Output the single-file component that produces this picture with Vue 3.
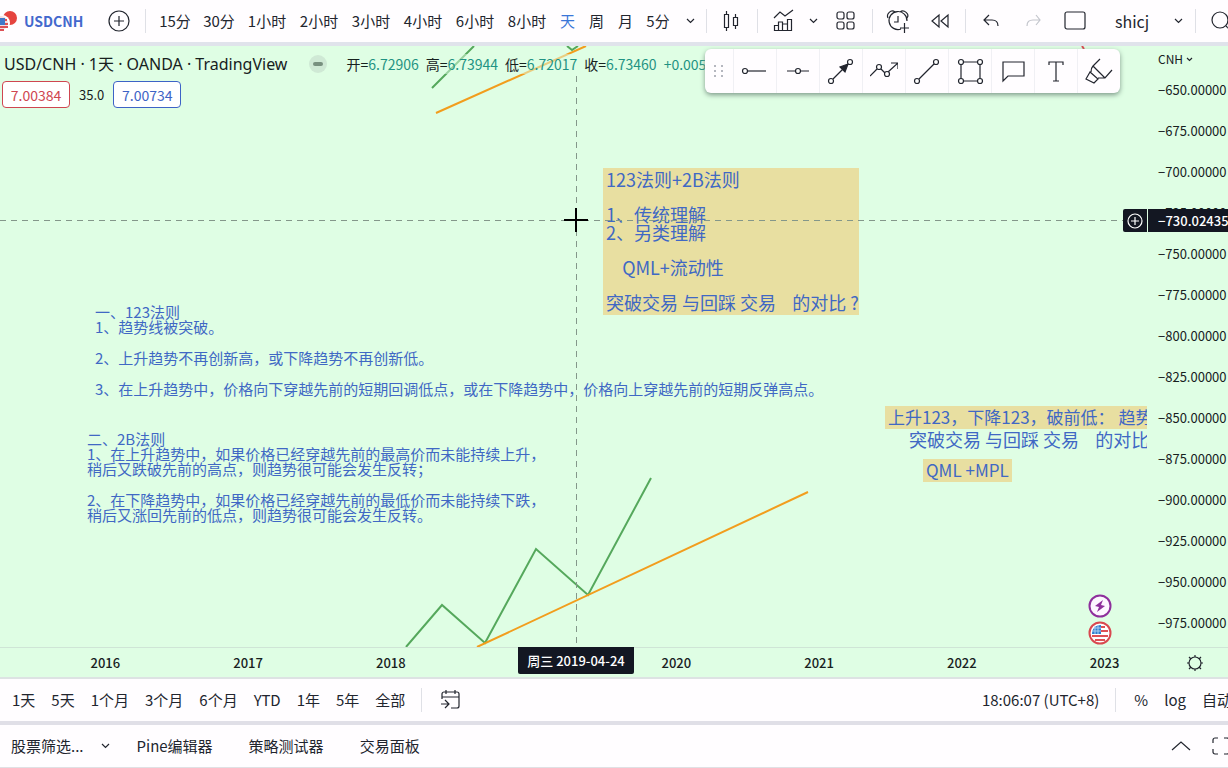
<script setup>
const minuteFrames = ['15分', '30分']
const hourFrames = ['1小时', '2小时', '3小时', '4小时', '6小时', '8小时']
const dayFrames = ['天', '周', '月']
const ohlc = [
  ['开', '6.72906'],
  ['高', '6.73944'],
  ['低', '6.72017'],
  ['收', '6.73460'],
]
const prices = Array.from({ length: 14 }, (_, i) => '−' + (650 + i * 25) + '.00000')
const years = ['2016', '2017', '2018', '', '2020', '2021', '2022', '2023']
const ranges = ['1天', '5天', '1个月', '3个月', '6个月', 'YTD', '1年', '5年', '全部']
const tools = [
  { name: '水平射线', d: 'M6 14h19', dots: [[4, 14]] },
  { name: '水平线', d: 'M3 14h9M16 14h9', dots: [[14, 14]] },
  { name: '箭头', d: 'M6 22L21 7', dots: [[4, 24], [23, 5]], head: 'M21 7l-8 3 5 5z' },
  { name: '路径', d: 'M0 19l7-7M11 12l4 4M18 15l10-9M21 6h7v6', dots: [[9, 10], [17, 17]] },
  { name: '趋势线', d: 'M6 22L21 7', dots: [[4, 24], [23, 5]] },
  { name: '矩形', d: 'M7 5h15M7 24h15M5 7v15M24 7v15', dots: [[5, 5], [24, 5], [5, 24], [24, 24]] },
  { name: '标注', d: 'M4 5h21v14H9l-5 5z', dots: [] },
  { name: '文本', d: 'M7 8V5h14v3M14 5v19M11 24h6', dots: [] },
  { name: '荧光笔', d: 'M15 2L8 9Q6 11 6 15M8 9l12 12M27 13l-7 8h-7M5 15l-4 7 8 4 4-4z', dots: [] },
]
</script>

<template>
  <div class="app">
    <header class="topbar">
      <button class="symbol">
        <svg class="flags" width="18" height="22" viewBox="0 0 18 22">
          <circle cx="10" cy="8" r="7" fill="#e5443f" />
          <circle cx="2" cy="13" r="8" fill="#fff" />
          <circle cx="1" cy="13" r="7" fill="#f3dfe1" />
          <path d="M0 17h8M0 20h4" stroke="#dd5055" stroke-width="2" />
          <path d="M0 8h5v7H0z" fill="#3f78c9" />
          <path d="M5 10h2M5 14h3" stroke="#dd5055" stroke-width="2" />
        </svg>
        <span>USDCNH</span>
      </button>
      <button class="plus" aria-label="添加商品">
        <svg width="22" height="22" viewBox="0 0 22 22"><circle cx="11" cy="11" r="10" /><path d="M6 11h10M11 6v10" /></svg>
      </button>
      <i class="sep"></i>
      <nav class="frames">
        <button v-for="f in minuteFrames" :key="f" class="minute">{{ f }}</button>
        <button v-for="f in hourFrames" :key="f" class="hour">{{ f }}</button>
        <button v-for="f in dayFrames" :key="f" class="day" :class="{ active: f === '天' }">{{ f }}</button>
        <button class="five">5分</button>
        <button class="chev" aria-label="更多周期"><svg width="9" height="6" viewBox="0 0 9 6"><path d="M1 1l3.500 3.500L8 1" /></svg></button>
      </nav>
      <i class="sep"></i>
      <div class="group">
        <button class="icon" aria-label="K线图">
          <svg width="28" height="28" viewBox="0 0 28 28"><path d="M6.500 7.500h4v13h-4zM8.500 4v4M8.500 20v4M15.500 10.500h4v8h-4zM17.500 7v3M17.500 18v4" /></svg>
        </button>
      </div>
      <i class="sep"></i>
      <div class="group tight">
        <button class="icon" aria-label="指标">
          <svg width="28" height="28" viewBox="0 0 28 28"><path d="M5 11l6-6 5 4 8-6M5.500 23.500v-5h4v5zM9.500 18v-3h4v8.500h-4M13.500 17h5v6.500h-5M18.500 23.500v-11h4v11zM5 23.500h18" /></svg>
        </button>
        <button class="chev small" aria-label="指标模板"><svg width="9" height="6" viewBox="0 0 9 6"><path d="M1 1l3.500 3.500L8 1" /></svg></button>
        <button class="icon grid" aria-label="布局">
          <svg width="28" height="28" viewBox="0 0 28 28"><rect x="5" y="5" width="7" height="7" rx="2" /><rect x="15" y="5" width="7" height="7" rx="2" /><rect x="5" y="15" width="7" height="7" rx="2" /><rect x="15" y="15" width="7" height="7" rx="2" /></svg>
        </button>
      </div>
      <i class="sep"></i>
      <div class="group">
        <button class="icon" aria-label="警报">
          <svg width="28" height="28" viewBox="0 0 28 28"><path d="M17 22a9 9 0 1 1 6-8M14 9v6h-4M20.500 16v10M16 21h9M4 11c-2-4 3-9 7-6M23 11c3-4-3-9-7-6" /></svg>
        </button>
        <button class="icon" aria-label="回放">
          <svg width="28" height="28" viewBox="0 0 28 28"><path d="M13 8v12l-7-6zM22 8v12l-7-6z" /></svg>
        </button>
      </div>
      <i class="sep"></i>
      <div class="group">
        <button class="icon" aria-label="撤销">
          <svg width="28" height="28" viewBox="0 0 28 28"><path d="M12 8l-5 5 5 5M7 13h8c4 0 6 2 6 6" /></svg>
        </button>
        <button class="icon faint" aria-label="重做" disabled>
          <svg width="28" height="28" viewBox="0 0 28 28"><path d="M17 8l4 5-4 5M21 13h-7c-4 0-6 2-6 6" /></svg>
        </button>
        <button class="icon" aria-label="全屏布局">
          <svg width="28" height="28" viewBox="0 0 28 28"><rect x="4" y="5" width="20" height="17" rx="2" /></svg>
        </button>
      </div>
      <button class="layout-name">
        <span>shicj</span>
        <svg width="9" height="6" viewBox="0 0 9 6"><path d="M1 1l3.500 3.500L8 1" /></svg>
      </button>
      <i class="sep"></i>
      <button class="icon search" aria-label="搜索">
        <svg width="28" height="28" viewBox="0 0 28 28"><circle cx="14" cy="13" r="8" /><path d="M20 19l5 5" /></svg>
      </button>
    </header>

    <main class="chart">
      <div class="body">
        <section class="plot">
          <svg class="canvas" aria-hidden="true">
            <g class="green">
              <path d="M474 0L432 42M567 0l5 4 6-4" />
              <path d="M406 601L442 559L485 597L536 503L588 549L651 432" />
            </g>
            <g class="orange">
              <path d="M586 0L436 67M477 601L808 446" />
            </g>
            <path class="red" d="M1082 0l2 3" />
          </svg>

          <div class="note wide yellow rules">
            <p>123法则+2B法则</p>
            <p>1、传统理解<br />2、另类理解</p>
            <p>&nbsp;&nbsp;&nbsp;&nbsp;QML+流动性</p>
            <p>突破交易 与回踩 交易&nbsp;&nbsp;&nbsp; 的对比 ?</p>
          </div>
          <div class="note first">
            <p>一、123法则<br />1、趋势线被突破。</p>
            <p>2、上升趋势不再创新高，或下降趋势不再创新低。</p>
            <p>3、在上升趋势中，价格向下穿越先前的短期回调低点，或在下降趋势中，价格向上穿越先前的短期反弹高点。</p>
          </div>
          <div class="note second">
            <p>二、2B法则<br />1、在上升趋势中，如果价格已经穿越先前的最高价而未能持续上升，<br />稍后又跌破先前的高点，则趋势很可能会发生反转；</p>
            <p>2、在下降趋势中，如果价格已经穿越先前的最低价而未能持续下跌，<br />稍后又涨回先前的低点，则趋势很可能会发生反转。</p>
          </div>
          <div class="note wide yellow tag trend">上升123，下降123，破前低： 趋势</div>
          <div class="note wide tag compare">突破交易 与回踩 交易&nbsp;&nbsp;&nbsp; 的对比 ?</div>
          <div class="note wide yellow tag qml">QML +MPL</div>

          <svg class="canvas" aria-hidden="true">
            <path class="cross" d="M0 174.500H1147M576.500 30V601" />
            <path class="cursor" d="M564 174h24M576 162v24" />
          </svg>

          <div class="legend">
            <h1>USD/CNH · 1天 · OANDA · TradingView</h1>
            <span class="status"></span>
            <div class="values">
              <span v-for="o in ohlc" :key="o[0]">{{ o[0] }}=<b>{{ o[1] }}</b></span>
              <span><b>+0.00554</b></span>
            </div>
          </div>
          <div class="quotes">
            <button class="sell">7.00384</button>
            <span>35.0</span>
            <button class="buy">7.00734</button>
          </div>

          <div class="events">
            <svg width="24" height="24" viewBox="0 0 24 24">
              <circle cx="12" cy="12" r="10.500" fill="#fdf6ff" stroke="#8e2f9c" stroke-width="2" />
              <path d="M15 6l-8 6 4 1-2 5 8-6-4-1z" fill="#8e2f9c" />
            </svg>
            <svg width="24" height="24" viewBox="0 0 24 24">
              <circle cx="12" cy="12" r="10.500" fill="#fff" stroke="#d9484f" stroke-width="2" />
              <path class="stripes" d="M12 6h5M12 10h8M4 15h16M7 19h10" stroke="#dd5055" />
              <path d="M13 4v9H4c0-5 3-9 9-9z" fill="#2f7fd0" />
              <path d="M6 7h7M4 10h9M7 5v8M10 4v9" stroke="#a9cdf0" />
            </svg>
          </div>
        </section>

        <aside class="scale">
          <button class="currency">CNH <svg width="7" height="5" viewBox="0 0 7 5"><path d="M1 1l2.500 2.500L6 1" /></svg></button>
          <span v-for="p in prices" :key="p" class="price">{{ p }}</span>
        </aside>
        <div class="marker">
          <button aria-label="添加警报">
            <svg width="18" height="18" viewBox="0 0 18 18"><circle cx="9" cy="9" r="7" /><path d="M5 9h8M9 5v8" /></svg>
          </button>
          <strong>−730.02435</strong>
        </div>

        <div class="tools">
          <svg class="grip" width="12" height="16" viewBox="0 0 12 16">
            <path d="M1 3h2M8 3h2M1 8h2M8 8h2M1 13h2M8 13h2" />
          </svg>
          <button v-for="t in tools" :key="t.name" :aria-label="t.name">
            <svg width="28" height="28" viewBox="0 0 28 28">
              <path :d="t.d" />
              <path v-if="t.head" class="head" :d="t.head" />
              <circle v-for="(c, i) in t.dots" :key="i" :cx="c[0]" :cy="c[1]" r="2.500" />
            </svg>
          </button>
        </div>
      </div>

      <div class="time">
        <span v-for="(y, i) in years" :key="i" class="year">{{ y }}</span>
        <button class="gear" aria-label="设置">
          <svg width="18" height="18" viewBox="0 0 18 18"><circle cx="9" cy="9" r="6" /><path d="M9 1v2M9 15v2M1 9h2M15 9h2M3 3l2 2M13 13l2 2M15 3l-2 2M5 13l-2 2" /></svg>
        </button>
        <strong class="date">周三 2019-04-24</strong>
      </div>
    </main>

    <div class="ranges">
      <button v-for="r in ranges" :key="r">{{ r }}</button>
      <i class="sep"></i>
      <button class="goto" aria-label="前往日期">
        <svg width="24" height="24" viewBox="0 0 24 24"><path d="M4 11V6a2 2 0 0 1 2-2h13a2 2 0 0 1 2 2v12a2 2 0 0 1-2 2h-6M4 9h17M8 2v4M17 2v4M3 16h8M7 12l4 4-4 4" /></svg>
      </button>
      <div class="right">
        <button class="clock">18:06:07 (UTC+8)</button>
        <i class="sep"></i>
        <button class="pct">%</button>
        <button>log</button>
        <button>自动</button>
      </div>
    </div>

    <footer class="tabs">
      <button class="screener">股票筛选... <svg width="9" height="6" viewBox="0 0 9 6"><path d="M1 1l3.500 3.500L8 1" /></svg></button>
      <button>Pine编辑器</button>
      <button>策略测试器</button>
      <button>交易面板</button>
      <div class="window">
        <button aria-label="展开面板"><svg width="20" height="12" viewBox="0 0 20 12"><path d="M1 10l9-8 9 8" /></svg></button>
        <button aria-label="最大化面板"><svg width="20" height="20" viewBox="0 0 20 20"><path d="M2 7V4a2 2 0 0 1 2-2h3M13 2h3a2 2 0 0 1 2 2v3M18 13v3a2 2 0 0 1-2 2h-3M7 18H4a2 2 0 0 1-2-2v-3" /></svg></button>
      </div>
    </footer>
  </div>
</template>

<style>
body { margin: 0; overflow: hidden; }
</style>

<style scoped>
.app {
  display: flex;
  flex-direction: column;
  height: 100vh;
  overflow: hidden;
  background: #fffdff;
  color: #22252e;
  font: 15px/20px "Noto Sans CJK SC", "Noto Sans", sans-serif;
}
button {
  display: flex;
  align-items: center;
  justify-content: center;
  flex: none;
  margin: 0;
  padding: 0;
  border: 0;
  background: none;
  color: inherit;
  font: inherit;
  white-space: nowrap;
}
svg { flex: none; fill: none; stroke: #22252e; stroke-width: 1.2; }
.sep { flex: none; width: 1px; height: 24px; background: #dfe0e6; }

.topbar {
  display: flex;
  align-items: center;
  height: 42px;
  flex: none;
  border-bottom: 4px solid #e0e3eb;
}
.symbol { width: 93px; gap: 6px; justify-content: flex-start; color: #4368cd; font-size: 14px; font-weight: 700; }
.flags { stroke: none; }
.plus { width: 52px; }
.frames { display: flex; padding: 0 2px 0 7px; }
.minute { width: 44px; }
.hour { width: 52px; }
.day { width: 29px; }
.five { width: 36px; }
.chev { width: 28px; }
.chev.small { width: 24px; }
.active { color: #3a76d8; }
.group { display: flex; align-items: center; gap: 6px; padding: 0 7px; }
.tight { gap: 0; padding: 0 8px 0 7px; }
.icon { width: 36px; height: 36px; }
.grid { margin-left: 3px; }
.faint svg { stroke: #c3c5cc; }
.layout-name { width: 95px; justify-content: flex-start; gap: 25px; padding-left: 15px; box-sizing: border-box; font-size: 16px; }
.search { margin-left: 6px; }

.chart {
  display: flex;
  flex: 1;
  flex-direction: column;
  min-height: 0;
  background: #dffee4;
  color: #17211e;
}
.body { position: relative; display: flex; flex: 1; min-height: 0; }
.plot { position: relative; flex: 1; min-width: 0; overflow: hidden; }
.canvas { position: absolute; top: 0; left: 0; width: 100%; height: 100%; }
.green path { stroke: #55a85c; stroke-width: 2; }
.orange path { stroke: #f29d1d; stroke-width: 2; }
.red { stroke: #d9484f; stroke-width: 2; }
.cross { stroke: #84978a; stroke-width: 1; stroke-dasharray: 6 5; }
.cursor { stroke: #000; stroke-width: 2; }

.legend { position: relative; display: flex; align-items: center; height: 24px; padding: 6px 0 0 4px; white-space: nowrap; }
h1 { margin: 0; font: 400 16px/24px "Noto Sans", "Noto Sans CJK SC", sans-serif; }
.status {
  display: flex;
  align-items: center;
  justify-content: center;
  flex: none;
  width: 18px;
  height: 18px;
  margin: 0 19px 0 22px;
  border-radius: 9px;
  background: #cfe9d5;
}
.status::before { content: ""; width: 10px; height: 4px; border-radius: 2px; background: #78907f; }
.values { display: flex; gap: 7px; background: rgba(223, 254, 228, 0.5); font-size: 14px; }
.values b { color: #1f9383; font-weight: 400; }
.quotes { position: relative; display: flex; align-items: center; gap: 9px; padding: 5px 0 0 2px; font-size: 13px; }
.quotes button { width: 68px; height: 27px; box-sizing: border-box; border: 1px solid; border-radius: 4px; background: #fff; font-size: 14px; }
.sell { color: #cf4650; }
.buy { color: #3d63c6; }

.note {
  position: absolute;
  display: flex;
  flex-direction: column;
  gap: 16px;
  color: #4068c4;
  font-size: 15px;
  line-height: 15px;
  white-space: nowrap;
}
.note p { margin: 0; }
.wide { gap: 17px; font-size: 18px; line-height: 18px; }
.yellow { background: #e8dfa1; }
.rules { top: 122px; left: 603px; padding: 2px 0 4px 3px; }
.first { top: 258px; left: 95px; }
.second { top: 385px; left: 87px; }
.tag { padding: 2px 3px 3px; }
.trend { top: 360px; left: 885px; font-size: 17px; }
.compare { top: 382px; left: 906px; }
.qml { top: 413px; left: 923px; font-size: 17px; }

.events { position: absolute; right: 35px; bottom: 2px; display: flex; flex-direction: column; gap: 3px; }
.events path { stroke-width: 1; }
.events .stripes { stroke-width: 2; }
.events path:not([stroke]) { stroke: none; }
.scale { display: flex; flex-direction: column; width: 81px; overflow: hidden; font-size: 13px; }
.currency { height: 23px; padding: 3px 0 0 11px; gap: 3px; justify-content: flex-start; font-size: 12px; box-sizing: border-box; }
.price { flex: none; height: 41px; padding-left: 11px; line-height: 41px; }
.marker { position: absolute; top: 163px; right: 0; display: flex; gap: 1px; height: 23px; }
.marker button { width: 24px; border-radius: 2px 0 0 2px; background: #131722; }
.marker svg { stroke: #fff; }
.marker strong { width: 80px; padding-left: 10px; box-sizing: border-box; background: #131722; color: #fff; font-size: 13px; font-weight: 500; line-height: 23px; }

.tools {
  position: absolute;
  top: 3px;
  right: 108px;
  display: flex;
  height: 44px;
  border-radius: 6px;
  background: #fffdff;
  box-shadow: 0 2px 5px #7f9a8a;
}
.tools button { width: 43px; border-left: 1px solid #f0f0f4; }
.tools circle { fill: #fff; }
.tools .head { fill: #22252e; }
.grip { align-self: center; margin: 0 8px; }
.grip path { stroke: #b5b7bf; stroke-width: 2; }

.time {
  position: relative;
  display: flex;
  align-items: center;
  height: 29px;
  flex: none;
  padding-left: 34px;
  border-top: 1px solid #cfe5d6;
  font-size: 14px;
}
.year { flex: 1; text-align: center; font-weight: 500; font-size: 13px; }
.gear { width: 38px; margin-right: 14px; }
.date {
  position: absolute;
  top: -1px;
  left: 518px;
  width: 116px;
  border-radius: 0 0 2px 2px;
  background: #131722;
  color: #fff;
  font-size: 13px;
  font-weight: 500;
  line-height: 27px;
  text-align: center;
}

.ranges {
  display: flex;
  align-items: center;
  height: 42px;
  flex: none;
  gap: 16px;
  padding-left: 12px;
  border-top: 2px solid #dde3e3;
  border-bottom: 4px solid #e0dfe7;
  overflow: hidden;
}
.right { display: flex; align-items: center; gap: 16px; margin: 0 -4px 0 auto; }
.pct { margin-left: 2px; }

.tabs {
  display: flex;
  align-items: center;
  height: 42px;
  flex: none;
  gap: 36px;
  padding-left: 11px;
  border-bottom: 1px solid #e0e0e4;
}
.screener { gap: 17px; margin-right: -9px; }
.window { display: flex; gap: 20px; margin: 0 -3px 0 auto; }
</style>
